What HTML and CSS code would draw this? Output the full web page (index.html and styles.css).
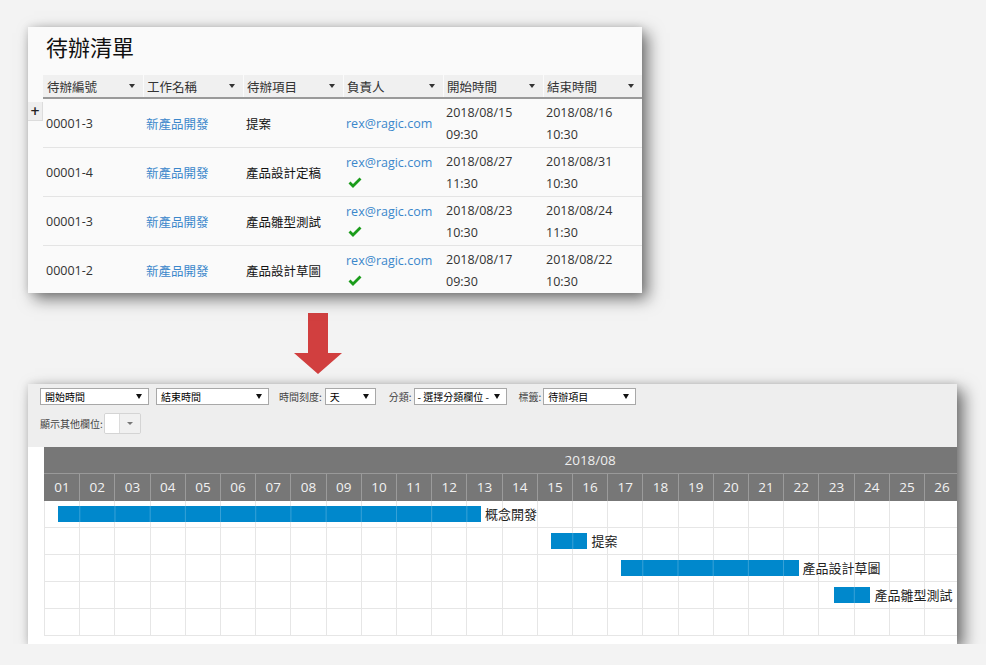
FILE: index.html
```html
<!DOCTYPE html>
<html lang="zh-Hant">
<head>
<meta charset="utf-8">
<title>待辦清單</title>
<link rel="stylesheet" href="styles.css">
</head>
<body>
<div class="page">
  <section class="sheet">
    <h1 class="sheet-title">待辦清單</h1>
    <div class="table">
      <div class="thead">
        <div class="th"><span>待辦編號</span><i class="caret"></i></div>
        <div class="th"><span>工作名稱</span><i class="caret"></i></div>
        <div class="th"><span>待辦項目</span><i class="caret"></i></div>
        <div class="th"><span>負責人</span><i class="caret"></i></div>
        <div class="th"><span>開始時間</span><i class="caret"></i></div>
        <div class="th"><span>結束時間</span><i class="caret"></i></div>
      </div>
      <div class="row">
        <button class="add" type="button">+</button>
        <div class="td">00001-3</div>
        <div class="td link">新產品開發</div>
        <div class="td item">提案</div>
        <div class="td link">rex@ragic.com</div>
        <div class="td date">2018/08/15<br>09:30</div>
        <div class="td date">2018/08/16<br>10:30</div>
      </div>
      <div class="row">
        <div class="td">00001-4</div>
        <div class="td link">新產品開發</div>
        <div class="td item">產品設計定稿</div>
        <div class="td owner"><span class="link">rex@ragic.com</span><svg class="check" viewBox="0 0 14 11" width="14" height="11"><path d="M1.5 5.5 L5 9 L12.5 1.5" fill="none" stroke="#1a9c1a" stroke-width="2.8"/></svg></div>
        <div class="td date">2018/08/27<br>11:30</div>
        <div class="td date">2018/08/31<br>10:30</div>
      </div>
      <div class="row">
        <div class="td">00001-3</div>
        <div class="td link">新產品開發</div>
        <div class="td item">產品雛型測試</div>
        <div class="td owner"><span class="link">rex@ragic.com</span><svg class="check" viewBox="0 0 14 11" width="14" height="11"><path d="M1.5 5.5 L5 9 L12.5 1.5" fill="none" stroke="#1a9c1a" stroke-width="2.8"/></svg></div>
        <div class="td date">2018/08/23<br>10:30</div>
        <div class="td date">2018/08/24<br>11:30</div>
      </div>
      <div class="row">
        <div class="td">00001-2</div>
        <div class="td link">新產品開發</div>
        <div class="td item">產品設計草圖</div>
        <div class="td owner"><span class="link">rex@ragic.com</span><svg class="check" viewBox="0 0 14 11" width="14" height="11"><path d="M1.5 5.5 L5 9 L12.5 1.5" fill="none" stroke="#1a9c1a" stroke-width="2.8"/></svg></div>
        <div class="td date">2018/08/17<br>09:30</div>
        <div class="td date">2018/08/22<br>10:30</div>
      </div>
    </div>
  </section>

  <div class="arrow">
    <svg viewBox="0 0 48 61" width="48" height="61"><polygon points="14,0 34,0 34,40 48,40 24,61 0,40 14,40" fill="#d13f3f"/></svg>
  </div>

  <section class="gantt">
    <div class="toolbar">
      <div class="tool-row">
        <div class="select select--start">開始時間<i class="tri"></i></div>
        <div class="select select--end">結束時間<i class="tri"></i></div>
        <span class="tool-label tool-label--scale">時間刻度:</span>
        <div class="select select--scale">天<i class="tri"></i></div>
        <span class="tool-label tool-label--group">分類:</span>
        <div class="select select--group">- 選擇分類欄位 -<i class="tri"></i></div>
        <span class="tool-label tool-label--tag">標籤:</span>
        <div class="select select--tag">待辦項目<i class="tri"></i></div>
      </div>
      <div class="tool-row tool-row--second">
        <span class="tool-label">顯示其他欄位:</span>
        <div class="multi"><span class="multi-box"></span><span class="multi-btn"><i class="tri tri--grey"></i></span></div>
      </div>
    </div>
    <div class="chart">
      <div class="timeline">
        <div class="month"><span class="month-text">2018/08</span></div>
        <div class="days">
          <div class="day">01</div><div class="day">02</div><div class="day">03</div><div class="day">04</div><div class="day">05</div><div class="day">06</div><div class="day">07</div><div class="day">08</div><div class="day">09</div><div class="day">10</div><div class="day">11</div><div class="day">12</div><div class="day">13</div><div class="day">14</div><div class="day">15</div><div class="day">16</div><div class="day">17</div><div class="day">18</div><div class="day">19</div><div class="day">20</div><div class="day">21</div><div class="day">22</div><div class="day">23</div><div class="day">24</div><div class="day">25</div><div class="day">26</div>
        </div>
        <div class="grow">
          <i></i><i></i><i></i><i></i><i></i><i></i><i></i><i></i><i></i><i></i><i></i><i></i><i></i><i></i><i></i><i></i><i></i><i></i><i></i><i></i><i></i><i></i><i></i><i></i><i></i><i></i>
          <div class="bar" style="left:12.9px;width:423.2px;background-position:21.3px 0"><span class="bar-label">概念開發</span></div>
        </div>
        <div class="grow">
          <i></i><i></i><i></i><i></i><i></i><i></i><i></i><i></i><i></i><i></i><i></i><i></i><i></i><i></i><i></i><i></i><i></i><i></i><i></i><i></i><i></i><i></i><i></i><i></i><i></i><i></i>
          <div class="bar" style="left:505.7px;width:36.7px;background-position:21.3px 0"><span class="bar-label">提案</span></div>
        </div>
        <div class="grow">
          <i></i><i></i><i></i><i></i><i></i><i></i><i></i><i></i><i></i><i></i><i></i><i></i><i></i><i></i><i></i><i></i><i></i><i></i><i></i><i></i><i></i><i></i><i></i><i></i><i></i><i></i>
          <div class="bar" style="left:576.1px;width:177.5px;background-position:21.3px 0"><span class="bar-label">產品設計草圖</span></div>
        </div>
        <div class="grow">
          <i></i><i></i><i></i><i></i><i></i><i></i><i></i><i></i><i></i><i></i><i></i><i></i><i></i><i></i><i></i><i></i><i></i><i></i><i></i><i></i><i></i><i></i><i></i><i></i><i></i><i></i>
          <div class="bar" style="left:788.8px;width:36.7px;background-position:19.8px 0"><span class="bar-label">產品雛型測試</span></div>
        </div>
        <div class="grow">
          <i></i><i></i><i></i><i></i><i></i><i></i><i></i><i></i><i></i><i></i><i></i><i></i><i></i><i></i><i></i><i></i><i></i><i></i><i></i><i></i><i></i><i></i><i></i><i></i><i></i><i></i>
        </div>
      </div>
    </div>
  </section>
</div>
</body>
</html>
```

FILE: styles.css
```css
html, body {
  margin: 0;
  padding: 0;
  background: #f3f3f3;
}

body {
  font-family: "Open Sans", "Noto Sans CJK TC", sans-serif;
  color: #333;
  overflow: hidden;
}

.page {
  padding: 27px 0 0 28px;
}

/* ---------- sheet (top card) ---------- */
.sheet {
  position: relative;
  width: 614px;
  height: 266px;
  background: #fafafa;
  box-shadow: 6px 6px 15px rgba(0, 0, 0, 0.52), 0 0 8px rgba(0, 0, 0, 0.12);
  overflow: hidden;
}

.sheet-title {
  margin: 0;
  height: 48px;
  padding-left: 18px;
  font-family: "Noto Sans CJK TC", sans-serif;
  font-weight: 400;
  font-size: 22px;
  line-height: 38px;
  color: #111;
}

.table {
  margin-left: 15px;
  font-size: 12.5px;
}

.thead,
.row {
  display: grid;
  grid-template-columns: repeat(5, 100px) 1fr;
}

.thead {
  height: 22px;
  background: #f0f0f0;
  border-bottom: 2px solid #9a9a9a;
}

.th {
  display: flex;
  align-items: center;
  justify-content: space-between;
  padding: 0 8px 0 3px;
  border-left: 1px solid #fbfbfb;
  color: #333;
  font-family: "Noto Sans CJK TC", sans-serif;
}

.th:first-child {
  border-left: 0;
  padding-left: 4px;
}

.caret {
  width: 0;
  height: 0;
  border-left: 3.5px solid transparent;
  border-right: 3.5px solid transparent;
  border-top: 4px solid #333;
}

.row {
  position: relative;
  height: 48px;
  border-bottom: 1px solid #e4e4e4;
  align-items: center;
}

.row:first-of-type {
  margin-top: 0;
}

.td {
  padding-left: 3px;
  color: #333;
  white-space: nowrap;
}

.link {
  color: #3a87cb;
}

.item {
  color: #111;
  font-family: "Noto Sans CJK TC", sans-serif;
}

.td.link {
  font-family: "Open Sans", "Noto Sans CJK TC", sans-serif;
}

.date {
  line-height: 22px;
  padding-top: 2px;
}

.owner {
  display: flex;
  flex-direction: column;
  line-height: 20px;
}

.check {
  display: block;
  margin: 4px 0 3px 2px;
}

.add {
  position: absolute;
  left: -15px;
  top: 3px;
  width: 15px;
  height: 19px;
  padding: 0;
  border: 0;
  border-right: 1px solid #dcdcdc;
  border-bottom: 1px solid #dcdcdc;
  background: #eeeeee;
  font: 700 12px/19px "DejaVu Sans", sans-serif;
  color: #222;
}

/* ---------- arrow ---------- */
.arrow {
  margin: 20px 0 0 266px;
  height: 61px;
}

.arrow svg {
  display: block;
}

/* ---------- gantt (bottom card) ---------- */
.gantt {
  margin-top: 10px;
  width: 929px;
  height: 260px;
  background: #fff;
  box-shadow: 7px 6px 15px rgba(0, 0, 0, 0.52), 0 0 8px rgba(0, 0, 0, 0.12);
  overflow: hidden;
}

.toolbar {
  height: 63px;
  box-sizing: border-box;
  padding: 4px 0 0 12px;
  background: #eeeeee;
  font-family: "Noto Sans CJK TC", sans-serif;
  font-size: 10px;
}

.tool-row {
  display: flex;
  align-items: center;
  height: 17px;
}

.tool-row--second {
  margin-top: 8px;
  height: 21px;
}

.select {
  position: relative;
  box-sizing: border-box;
  height: 17px;
  padding-left: 4px;
  border: 1px solid #a8a8a8;
  background: #fff;
  color: #000;
  line-height: 15px;
  white-space: nowrap;
  overflow: hidden;
}

.select .tri {
  position: absolute;
  right: 6px;
  top: 5px;
}

.tri {
  width: 0;
  height: 0;
  border-left: 3px solid transparent;
  border-right: 3px solid transparent;
  border-top: 5px solid #111;
}

.tri--grey {
  border-top-color: #777;
  border-left-width: 3.5px;
  border-right-width: 3.5px;
  border-top-width: 3.5px;
}

.select--start { width: 109px; }
.select--end { width: 113px; margin-left: 7px; }
.select--scale { width: 51px; margin-left: 3px; }
.select--group { width: 93px; margin-left: 2px; padding-left: 3px; }
.select--tag { width: 93px; margin-left: 2px; }

.tool-label {
  color: #444;
  white-space: nowrap;
}

.tool-label--scale { margin-left: 10px; }
.tool-label--group { margin-left: 13px; }
.tool-label--tag { margin-left: 12px; }

.multi {
  display: flex;
  width: 37px;
  height: 21px;
  margin-left: 1px;
  box-sizing: border-box;
  border: 1px solid #d4d4d4;
  border-radius: 2px;
  overflow: hidden;
}

.multi-box {
  width: 14px;
  background: #fff;
  border-right: 1px solid #dcdcdc;
}

.multi-btn {
  flex: 1;
  display: flex;
  align-items: center;
  justify-content: center;
  background: #f0f0f0;
}

.chart {
  padding-left: 16px;
  overflow: hidden;
}

.timeline {
  width: 916.2px;
}

.month {
  height: 26px;
  box-sizing: content-box;
  padding-left: 176px;
  background: #777;
  border-bottom: 1px solid #999;
  color: #eee;
  font-size: 13.5px;
  line-height: 26px;
  text-align: center;
}

.days,
.grow {
  display: grid;
  grid-template-columns: repeat(26, 1fr);
  border-left: 1px solid #777;
}

.days {
  height: 27px;
  background: #777;
}

.day {
  border-right: 1px solid #9b9b9b;
  color: #f2f2f2;
  font-size: 13.5px;
  line-height: 27px;
  text-align: center;
}

.grow {
  position: relative;
  height: 26px;
  border-left-color: #e6e6e6;
  border-bottom: 1px solid #e6e6e6;
}

.grow > i {
  border-right: 1px solid #e6e6e6;
}

.bar {
  position: absolute;
  top: 5px;
  height: 16px;
  background-color: #0088cc;
  background-image: linear-gradient(90deg, rgba(255, 255, 255, 0.22) 1px, transparent 1px);
  background-size: 35.2px 100%;
}

.bar-label {
  position: absolute;
  left: calc(100% + 4px);
  top: 50%;
  transform: translateY(-50%);
  white-space: nowrap;
  font-family: "Noto Sans CJK TC", sans-serif;
  font-size: 13px;
  line-height: 16px;
  color: #222;
}
```
